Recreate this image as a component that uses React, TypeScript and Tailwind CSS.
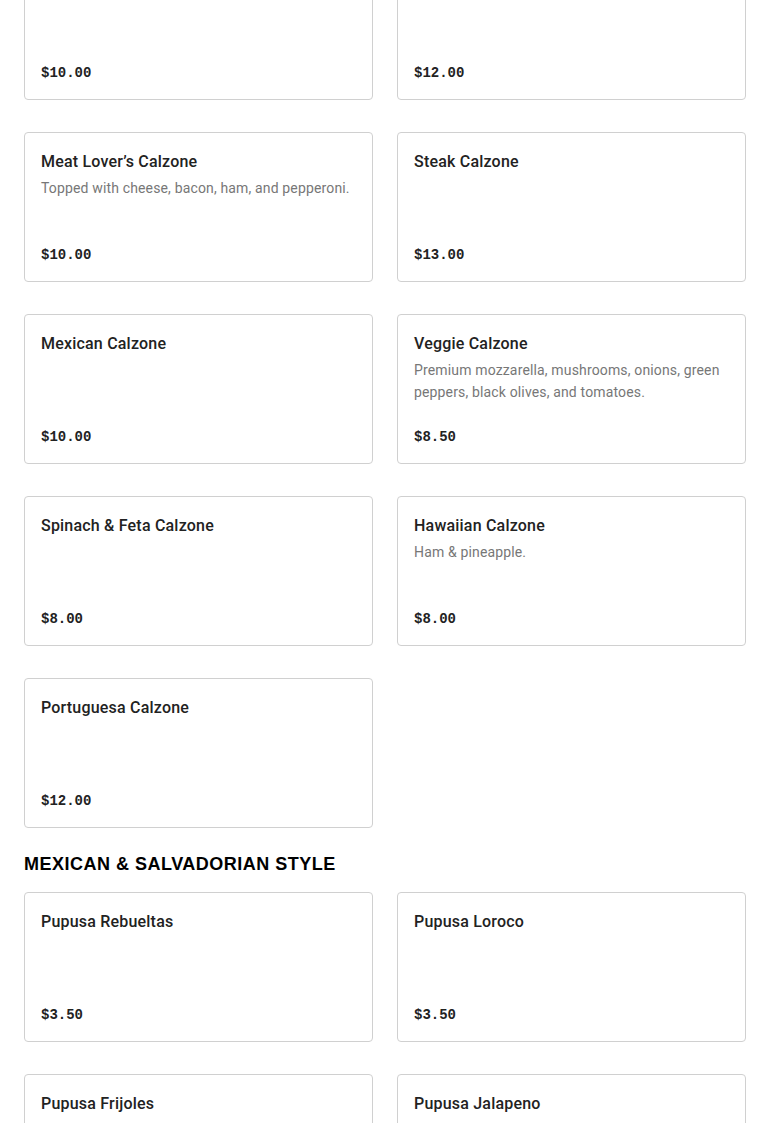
const TOP = [
  { name: "Chicken Calzone", desc: "", price: "$10.00" },
  { name: "Philly Calzone", desc: "", price: "$12.00" },
];

const CALZONES = [
  { name: "Meat Lover’s Calzone", desc: "Topped with cheese, bacon, ham, and pepperoni.", price: "$10.00" },
  { name: "Steak Calzone", desc: "", price: "$13.00" },
  { name: "Mexican Calzone", desc: "", price: "$10.00" },
  {
    name: "Veggie Calzone",
    desc: "Premium mozzarella, mushrooms, onions, green peppers, black olives, and tomatoes.",
    price: "$8.50",
  },
  { name: "Spinach & Feta Calzone", desc: "", price: "$8.00" },
  { name: "Hawaiian Calzone", desc: "Ham & pineapple.", price: "$8.00" },
  { name: "Portuguesa Calzone", desc: "", price: "$12.00" },
];

const PUPUSAS = [
  { name: "Pupusa Rebueltas", desc: "", price: "$3.50" },
  { name: "Pupusa Loroco", desc: "", price: "$3.50" },
  { name: "Pupusa Frijoles", desc: "", price: "$3.50" },
  { name: "Pupusa Jalapeno", desc: "", price: "$3.50" },
];

type Item = { name: string; desc: string; price: string };

function ItemCard({ item }: { item: Item }) {
  return (
    <div className="flex h-[150px] flex-col rounded-[4px] border border-[#d0d0d0] bg-white p-4">
      <h3 className="mt-px font-['Roboto',sans-serif] text-[16px] font-medium leading-6 tracking-[0.2px] text-[#222]">
        {item.name}
      </h3>
      {item.desc && (
        <p className="mt-[3px] font-['Roboto',sans-serif] text-[14px] leading-[22px] tracking-[0.15px] text-[#777]">
          {item.desc}
        </p>
      )}
      <div className="mt-auto font-['Liberation_Mono',monospace] text-[14px] font-bold leading-5 text-[#222]">
        {item.price}
      </div>
    </div>
  );
}

export default function App() {
  return (
    <div className="min-h-screen overflow-hidden bg-white">
      <div className="mx-6 mt-[-50px]">
        <div className="grid grid-cols-2 gap-x-6 gap-y-8">
          {TOP.concat(CALZONES).map((it) => (
            <ItemCard key={it.name} item={it} />
          ))}
        </div>

        {/* Mexican section */}
        <h2 className="mt-6 mb-4 font-['Liberation_Sans',sans-serif] text-[18px] font-black uppercase leading-6 tracking-[0.5px] text-black">
          Mexican &amp; Salvadorian Style
        </h2>
        <div className="grid grid-cols-2 gap-x-6 gap-y-8">
          {PUPUSAS.map((it) => (
            <ItemCard key={it.name} item={it} />
          ))}
        </div>
      </div>
    </div>
  );
}
